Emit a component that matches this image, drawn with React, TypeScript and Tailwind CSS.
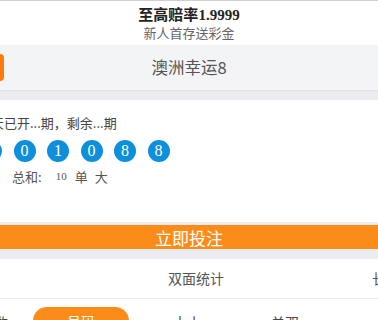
import React from 'react';

const BALLS = ['0', '0', '1', '0', '8', '8'];

export default function App() {
  const cjk = { fontFamily: '"Noto Sans CJK SC", "Noto Sans", sans-serif' };
  const serif = { fontFamily: '"Liberation Serif", "DejaVu Serif", serif' };
  return (
    <div className="w-[378px] h-[320px] overflow-hidden bg-white text-[#333]" style={cjk}>
      {/* header */}
      <div className="border-t border-[#cfcfcf] h-[45px] flex flex-col items-center justify-center bg-white">
        <div className="text-[15px] leading-[18px] font-bold text-[#222]">
          至高赔率<span style={serif}>1.9999</span>
        </div>
        <div className="text-[13px] leading-[17px] text-[#666]">新人首存送彩金</div>
      </div>

      {/* game title bar */}
      <div className="h-[46px] bg-[#f3f4f6] border-b border-[#e2e2e6] flex items-center">
        <div className="ml-[-6px] w-[10px] h-[27px] rounded-[4px] bg-[#ff7a0a] shrink-0" />
        <span className="flex-1 text-center pr-[4px] text-[16.5px] text-[#555] leading-none">澳洲幸运8</span>
      </div>
      <div className="h-[9px] bg-[#ececf0]" />

      {/* draw info */}
      <div className="h-[122px] bg-white pt-[14px]">
        <div className="ml-[-9px] text-[13px] leading-[18px] text-[#444] whitespace-nowrap">天已开...期，剩余...期</div>
        <div className="mt-[8px] ml-[-20px] flex gap-[11.5px]">
          {BALLS.map((b, i) => (
            <div
              key={i}
              className="w-[22px] h-[22px] shrink-0 rounded-full bg-[#0e8fdc] text-white flex items-center justify-center text-[16px] leading-none"
              style={serif}
            >
              {b}
            </div>
          ))}
        </div>
        <div className="mt-[6px] flex items-center text-[13px] text-[#555] leading-[18px]">
          <span className="ml-[12px]">总和:</span>
          <span className="ml-[14px] text-[11px] text-[#555] -mt-[2px]" style={serif}>10</span>
          <span className="ml-[8px]">单</span>
          <span className="ml-[7px]">大</span>
        </div>
      </div>

      {/* bet button */}
      <div className="h-[3px] bg-[#ececf0]" />
      <div className="h-[24px] bg-[#fb8c1a] flex items-center justify-center text-white text-[17px] leading-none">
        立即投注
      </div>
      <div className="h-[10px] bg-[#ececf0]" />

      {/* tabs */}
      <div className="h-[40px] border-b border-[#ececec] flex items-center pl-[168px] gap-[148px] text-[14px] text-[#555] whitespace-nowrap">
        <span className="shrink-0">双面统计</span>
        <span className="shrink-0">长龙</span>
      </div>

      {/* sub tabs */}
      <div className="h-[40px] flex items-start pt-[8px] ml-[-6px] text-[14px] text-[#444] whitespace-nowrap">
        <span className="shrink-0 mt-[5px] leading-[20px]">数</span>
        <div className="shrink-0 ml-[25px] w-[96px] h-[28px] rounded-full bg-[#fb8c1a] text-white flex items-center justify-center">
          号码
        </div>
        <span className="shrink-0 mt-[5px] ml-[44px] leading-[20px]">大小</span>
        <span className="shrink-0 mt-[5px] ml-[70px] leading-[20px]">单双</span>
        <span className="shrink-0 mt-[5px] ml-[79px] leading-[20px]">总和</span>
      </div>
    </div>
  );
}
